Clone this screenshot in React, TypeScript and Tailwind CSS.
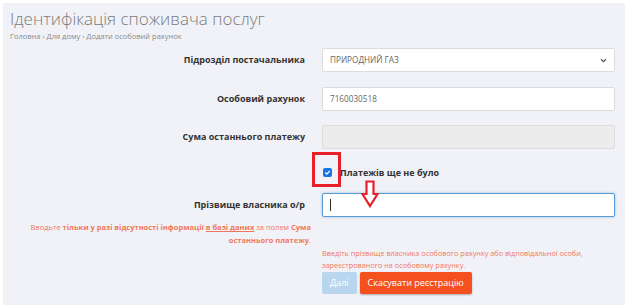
import React from "react";

export default function App() {
  const font = { fontFamily: '"Open Sans", "Noto Sans", sans-serif' };
  return (
    <div className="w-[628px] h-[308px] bg-white p-[3px]" style={font}>
      <div className="w-[622px] h-[302px] bg-[#f1f2f7] pl-[7px] pt-[5px]">
        <div className="text-[17px] font-light leading-[22px] text-[#7a7a7a]">Ідентифікація споживача послуг</div>
        <div className="text-[7.5px] leading-[10px] text-[#8a8a8a] mt-[1px]">Головна › Для дому › Додати особовий рахунок</div>

        <div className="mt-[7px] grid grid-cols-[295px_293px] gap-x-[17px]">
          <div className="flex items-center justify-end h-[24px] text-[9px] font-bold text-[#333]">Підрозділ постачальника</div>
          <div className="h-[24px] bg-white border border-[#dcdcdc] rounded-[2px] flex items-center justify-between px-[7px] text-[8.2px] text-[#666]">
            <span>ПРИРОДНИЙ ГАЗ</span>
            <svg width="7" height="5" viewBox="0 0 8 6"><path d="M1 1.5 L4 4.5 L7 1.5" stroke="#555" strokeWidth="1.4" fill="none" /></svg>
          </div>

          <div className="mt-[15px] flex items-center justify-end h-[24px] text-[9px] font-bold text-[#333]">Особовий рахунок</div>
          <div className="mt-[15px] h-[24px] bg-white border border-[#dcdcdc] rounded-[2px] flex items-center px-[7px] text-[8.2px] text-[#666]">7160030518</div>

          <div className="mt-[14px] flex items-center justify-end h-[24px] text-[9px] font-bold text-[#333]">Сума останнього платежу</div>
          <div className="mt-[14px] h-[24px] bg-[#ececec] border border-[#dcdcdc] rounded-[2px]"></div>

          <div></div>
          <div className="relative h-[44px]">
            <div className="absolute left-[-10px] top-[3px] w-[29px] h-[35px] border-[3px] border-[#e8202a]"></div>
            <div className="absolute left-[1px] top-[17px] flex items-center">
              <span className="w-[9px] h-[9px] rounded-[2px] bg-[#1a73e8] flex items-center justify-center">
                <svg width="7" height="7" viewBox="0 0 8 8"><path d="M1.5 4 L3.3 5.8 L6.6 2.2" stroke="white" strokeWidth="1.5" fill="none" /></svg>
              </span>
              <span className="ml-[8px] text-[9px] font-bold text-[#333]">Платежів ще не було</span>
            </div>
            <svg className="absolute left-[39px] top-[31px] z-10" width="18" height="28" viewBox="0 0 18 28">
              <path d="M5.5 1.5 H12.5 V14 H16.5 L9 26 L1.5 14 H5.5 Z" fill="white" stroke="#e8202a" strokeWidth="2.2" strokeLinejoin="miter" />
            </svg>
          </div>

          <div className="flex items-center justify-end h-[24px] text-[9px] font-bold text-[#333]">Прізвище власника о/р</div>
          <div className="h-[24px] bg-white border border-[#5b9bd5] rounded-[2px] flex items-center px-[7px] shadow-[0_0_3px_rgba(91,155,213,0.6)]">
            <span className="w-px h-[12px] bg-[#333]"></span>
          </div>

          <div className="mt-[4px] -mr-[6px] text-right text-[7.5px] leading-[13px] text-[#f2785c]">
            Вводьте <b>тільки у разі відсутності інформації <u>в базі даних</u></b> за полем <b>Сума останнього платежу</b>.
          </div>
          <div></div>

          <div></div>
          <div className="mt-[0px] pr-[20px] text-[7.3px] leading-[12px] text-[#f2785c]">
            Введіть прізвище власника особового рахунку або відповідальної особи, зареєстрованого на особовому рахунку.
          </div>

          <div></div>
          <div className="mt-[1px] flex gap-[3px]">
            <button className="h-[22px] px-[8px] bg-[#b8d6ee] text-white text-[9px] rounded-[2px]">Далі</button>
            <button className="h-[22px] px-[8px] bg-[#f4511e] text-white text-[9px] rounded-[2px] shadow-[0_1px_2px_rgba(0,0,0,0.3)]">Скасувати реєстрацію</button>
          </div>
        </div>
      </div>
    </div>
  );
}
